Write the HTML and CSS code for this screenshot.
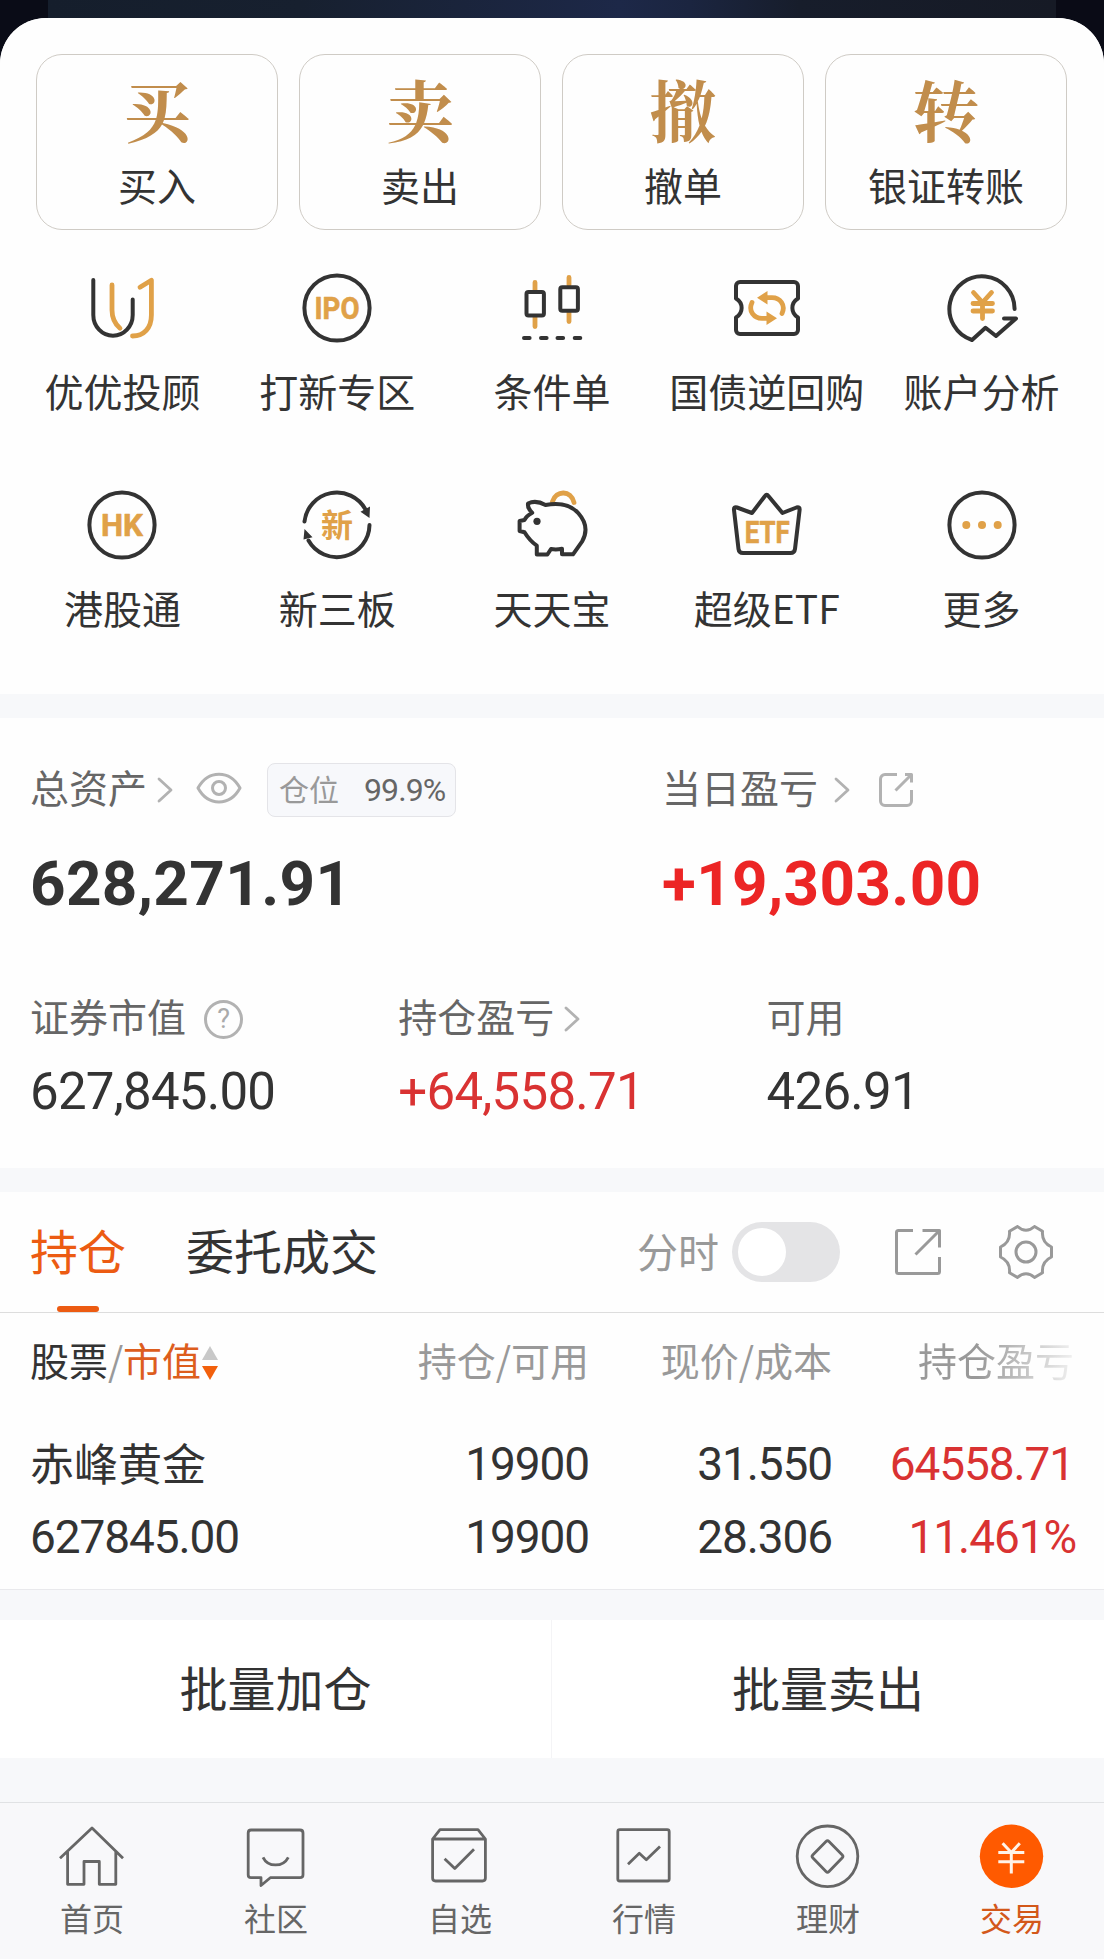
FILE: index.html
```html
<!DOCTYPE html>
<html lang="zh-CN">
<head>
<meta charset="utf-8">
<title>交易</title>
<link rel="stylesheet" href="styles.css">
</head>
<body>
<div class="app">
  <main class="sheet">
    <section class="quick">
      <a class="quick-card"><span class="quick-glyph">买</span><span class="label">买入</span></a>
      <a class="quick-card"><span class="quick-glyph">卖</span><span class="label">卖出</span></a>
      <a class="quick-card"><span class="quick-glyph">撤</span><span class="label">撤单</span></a>
      <a class="quick-card"><span class="quick-glyph">转</span><span class="label">银证转账</span></a>
    </section>

    <section class="funcs">
      <a class="func">
        <svg class="func-icon" viewBox="0 0 76 76"><path class="ink" d="M9.3 10V45a19.7 20.8 0 0 0 39.4 0V29.5"/><path class="gold" d="M28 15V40C28 49 31 54 36 58.3"/><path class="gold" d="M56 17.3L67.4 10.3V45C67.4 58 60 66 48.5 66"/></svg>
        <span class="label">优优投顾</span>
      </a>
      <a class="func">
        <svg class="func-icon" viewBox="0 0 76 76"><circle class="ink" cx="38" cy="38" r="32.6"/><text class="badge" x="38" y="49" text-anchor="middle" textLength="45" lengthAdjust="spacingAndGlyphs">IPO</text></svg>
        <span class="label">打新专区</span>
      </a>
      <a class="func">
        <svg class="func-icon" viewBox="0 0 76 76"><path class="gold" d="M21 12.500V20M21 47V56.500M55 7.500V15M55 42V51.500"/><rect class="ink" x="12.500" y="22" width="17.400" height="23.400" rx="2"/><rect class="ink" x="46.300" y="17.200" width="17.600" height="23.600" rx="2"/><path class="ink" d="M10 68h5.600M27 68h5.600M43.500 68h5.600M60.700 68h5.600"/></svg>
        <span class="label">条件单</span>
      </a>
      <a class="func">
        <svg class="func-icon" viewBox="0 0 76 76"><path class="ink" d="M11 12H65a4 4 0 0 1 4 4V28.500C61.500 33 61.500 43 69 47.500V60a4 4 0 0 1-4 4H11a4 4 0 0 1-4-4V47.500C14.500 43 14.500 33 7 28.500V16a4 4 0 0 1 4-4Z"/><path class="gold" d="M53 43.500C57 35 51 27.700 43 27.700H36M23 32.500C19 41 25 48.300 33 48.300H40"/><path class="gold-fill" d="M28 27.700L38.500 21v13.400ZM48 48.300L37.500 55V41.600Z"/></svg>
        <span class="label">国债逆回购</span>
      </a>
      <a class="func">
        <svg class="func-icon" viewBox="0 0 76 76"><path class="ink" d="M70.600 39A32.600 32.600 0 1 0 28 70L41.500 57.700L52 66L72 48.500H60"/><path class="gold" d="M29.500 22.500L38.500 32.500L47.500 22.500M38.500 32.500V48.500M29 33.500H48.500M29 41H48.500"/></svg>
        <span class="label">账户分析</span>
      </a>
      <a class="func">
        <svg class="func-icon" viewBox="0 0 76 76"><circle class="ink" cx="38" cy="38" r="32.6"/><text class="badge" x="38" y="49" text-anchor="middle" textLength="42" lengthAdjust="spacingAndGlyphs">HK</text></svg>
        <span class="label">港股通</span>
      </a>
      <a class="func">
        <svg class="func-icon" viewBox="0 0 76 76"><path class="ink" d="M5.500 34.500A32.600 32.600 0 0 1 66.500 22.500M70.500 38A32.600 32.600 0 0 1 9.500 53.500"/><path class="ink-fill" d="M71 19.500L61.500 24.800L70.500 31ZM5.500 42L4.500 52.500L13.500 50.300Z"/><text class="badge badge-cn" x="38" y="49.500" text-anchor="middle">新</text></svg>
        <span class="label">新三板</span>
      </a>
      <a class="func">
        <svg class="func-icon" viewBox="0 0 76 76"><path class="gold" d="M38.500 14.500C42 3 57 3 60 15.500"/><path class="ink" d="M14 16.500C20 13.500 27 15.500 31.500 18C48 15 58 19 64.400 26.300C73 36 73 46 68 54.700L59 67.300H48V61.800C44 62.500 40 62.500 37 62L33.400 67.500H22.800V58.700C16 54 14 51 10.500 45.300L5.600 44V34L10.500 33C12 29.500 15 27.500 18.200 25.700C15 23 13.500 21 14 16.500Z"/><circle class="ink-fill" cx="23" cy="34.300" r="3.600"/></svg>
        <span class="label">天天宝</span>
      </a>
      <a class="func">
        <svg class="func-icon" viewBox="0 0 76 76"><path class="ink" d="M36 9Q37.700 6.500 39.400 9L53.500 26L67.500 20.500Q71 19.500 70.600 23L66 62Q65.500 66 61.500 66H14Q10 66 9.500 62L5 23Q4.600 19.500 8 20.500L23 26Z"/><text class="badge" x="38.300" y="55.500" text-anchor="middle" textLength="45" lengthAdjust="spacingAndGlyphs">ETF</text></svg>
        <span class="label">超级ETF</span>
      </a>
      <a class="func">
        <svg class="func-icon" viewBox="0 0 76 76"><circle class="ink" cx="38" cy="38" r="32.6"/><g class="gold-dot"><circle cx="22.300" cy="38" r="4"/><circle cx="38" cy="38" r="4"/><circle cx="53.700" cy="38" r="4"/></g></svg>
        <span class="label">更多</span>
      </a>
    </section>

    <section class="assets">
      <div class="totals">
        <div class="total">
          <div class="caption">
            <span class="caption-text">总资产</span>
            <svg class="chevron" viewBox="0 0 16 26"><path d="M2 2L14 13L2 24"/></svg>
            <svg class="eye" viewBox="0 0 46 32"><path d="M2 16C12-2.500 34-2.500 44 16C34 34.500 12 34.500 2 16Z"/><circle cx="23" cy="16" r="6.500"/></svg>
            <span class="chip">仓位<b class="chip-value">99.9%</b></span>
          </div>
          <strong class="sum">628,271.91</strong>
        </div>
        <div class="total">
          <div class="caption">
            <span class="caption-text">当日盈亏</span>
            <svg class="chevron chevron-far" viewBox="0 0 16 26"><path d="M2 2L14 13L2 24"/></svg>
            <svg class="share-small" viewBox="0 0 34 34"><path d="M18 1.500H6A4.500 4.500 0 0 0 1.500 6V28A4.500 4.500 0 0 0 6 32.500H28A4.500 4.500 0 0 0 32.500 28V17M26 1.500H32.500V9.500M32 2L16.500 17.500"/></svg>
          </div>
          <strong class="sum sum-up">+19,303.00</strong>
        </div>
      </div>
      <div class="details">
        <div class="detail">
          <div class="detail-head">证券市值<span class="help">?</span></div>
          <span class="amount">627,845.00</span>
        </div>
        <div class="detail">
          <div class="detail-head">持仓盈亏<svg class="chevron chevron-detail" viewBox="0 0 16 26"><path d="M2 2L14 13L2 24"/></svg></div>
          <span class="amount up">+64,558.71</span>
        </div>
        <div class="detail">
          <div class="detail-head">可用</div>
          <span class="amount">426.91</span>
        </div>
      </div>
    </section>

    <section class="holdings">
      <header class="tabs">
        <a class="tab tab-on">持仓</a>
        <a class="tab">委托成交</a>
        <span class="switch-label">分时</span>
        <span class="switch"></span>
        <svg class="share" viewBox="0 0 46 46"><path d="M18 1.500H3.500Q1.500 1.500 1.500 3.500V42.500Q1.500 44.500 3.500 44.500H42.500Q44.500 44.500 44.500 42.500V28M27.500 1.500H44.500V18.500M44 2L20.500 25.500"/></svg>
        <svg class="gear" viewBox="0 0 54 54"><path d="M18.500 1.500Q27 9 35.500 1.500L43.500 6.300Q42.500 17.500 52.500 22V32Q42.500 36.500 43.500 47.700L35.500 52.500Q27 45 18.500 52.500L10.500 47.700Q11.500 36.500 1.500 32V22Q11.500 17.500 10.500 6.300Z"/><circle cx="27" cy="27" r="10"/></svg>
      </header>
      <div class="grid head">
        <span class="head-first">股票<i class="slash">/</i><em class="sorted">市值</em><svg class="sort" viewBox="0 0 16 34"><path class="sort-up" d="M8 0L16 14H0Z"/><path class="sort-down" d="M0 20H16L8 34Z"/></svg></span>
        <span>持仓/可用</span>
        <span>现价/成本</span>
        <span class="fading">持仓盈亏</span>
      </div>
      <div class="grid row">
        <span class="stock">赤峰黄金</span><span>19900</span><span>31.550</span><span class="up">64558.71</span>
        <span>627845.00</span><span>19900</span><span>28.306</span><span class="up pct">11.461%</span>
      </div>
    </section>

    <section class="actions">
      <a class="action">批量加仓</a>
      <a class="action">批量卖出</a>
    </section>
  </main>

  <nav class="nav">
    <a class="nav-item"><svg class="nav-icon" viewBox="0 0 72 72"><path d="M4 38.300L36 8L67 38.300M11.600 32V64.300H28V41.500H43.300V64.300H59.800V32"/></svg>首页</a>
    <a class="nav-item"><svg class="nav-icon" viewBox="0 0 72 72"><path d="M11 10H60Q63 10 63 13V54.700Q63 57.700 60 57.700H30.300L21 65.500V57.700H11Q8.200 57.700 8.200 54.700V13Q8.200 10 11 10ZM23 37.300C28 47.500 43 47.500 48.300 37.300"/></svg>社区</a>
    <a class="nav-item"><svg class="nav-icon" viewBox="0 0 72 72"><path d="M8.600 19L16 9.700H54L61.400 19V58Q61.400 61 58.400 61H11.600Q8.600 61 8.600 58ZM8.600 19H61.400M20.600 38.700L30.800 48.500L50 29.300"/></svg>自选</a>
    <a class="nav-item"><svg class="nav-icon" viewBox="0 0 72 72"><rect x="9.800" y="9.700" width="51.400" height="51.300" rx="2"/><path d="M20 44.300L31.300 33.300L38.300 39.700L52 26.500"/></svg>行情</a>
    <a class="nav-item"><svg class="nav-icon" viewBox="0 0 72 72"><circle cx="35.500" cy="36.300" r="30.300"/><path d="M34 21.500Q35.500 20 37 21.500L50.300 35Q51.600 36.300 50.300 37.700L37 51.500Q35.500 53 34 51.500L20.700 37.700Q19.400 36.300 20.700 35Z"/></svg>理财</a>
    <a class="nav-item nav-on"><svg class="nav-icon" viewBox="0 0 72 72"><circle class="coin" cx="35.500" cy="36.300" r="31.700"/><path class="yen" d="M26.600 23.300L35.300 32.500L43.800 23.300M35.300 32.300V53.500M22.300 32.500H48.300M22.300 41.800H48.300"/></svg>交易</a>
  </nav>
</div>
</body>
</html>
```
FILE: styles.css
```css
* { box-sizing: border-box; }

body {
  margin: 0;
  color: #333;
  font-family: "Noto Sans CJK SC", sans-serif;
}

.app {
  width: 1104px;
  height: 1959px;
  padding-top: 18px;
  display: flex;
  flex-direction: column;
  overflow: hidden;
  background:
    linear-gradient(90deg, #0a0c17 48px, #151e2c 48px, #17202f 300px, #1d2848 620px, #1b2540 690px, #171d2b 800px, #161a25 1056px, #0a0b16 1056px) top / 100% 80px no-repeat,
    #f7f8fa;
}

.sheet {
  flex: 1;
  border-radius: 46px 46px 0 0;
  background: #f7f8fa;
  overflow: hidden;
}

.label {
  font-size: 39px;
  line-height: 40px;
  white-space: nowrap;
}

.up { color: #d93232; }

/* buy / sell cards */
.quick {
  display: grid;
  grid-template-columns: repeat(4, 242px);
  gap: 21px;
  padding: 36px 36px 0;
  background: #fefefe;
}

.quick-card {
  display: flex;
  flex-direction: column;
  align-items: center;
  height: 176px;
  padding-top: 21px;
  border: 1px solid #cfcbc5;
  border-radius: 26px;
}

.quick-glyph {
  margin-bottom: 24px;
  color: #c18d4c;
  font: 700 67px/64px "Noto Serif CJK SC", "Source Han Serif SC", "Noto Sans CJK SC", serif;
}

/* function shortcuts */
.funcs {
  display: grid;
  grid-template-columns: repeat(5, 214.8px);
  justify-content: center;
  row-gap: 77px;
  padding: 40px 0 67px;
  background: #fefefe;
}

.func {
  display: flex;
  flex-direction: column;
  align-items: center;
  gap: 24px;
}

.func-icon { width: 76px; height: 76px; }

.ink, .gold {
  fill: none;
  stroke: #333;
  stroke-width: 4;
  stroke-linecap: round;
  stroke-linejoin: round;
}

.gold { stroke: #e0a148; stroke-width: 4.8; }
.ink-fill { fill: #333; }
.gold-fill, .gold-dot { fill: #e0a148; }

.badge {
  fill: #e0a148;
  stroke: #e0a148;
  stroke-width: .6;
  stroke-linejoin: round;
  font: 700 31px Roboto, sans-serif;
}

.badge-cn { font: 700 32px "Noto Sans CJK SC", sans-serif; stroke: none; }

/* assets */
.assets {
  height: 450px;
  margin-top: 24px;
  padding: 45px 30px 0;
  background: #fefefe;
}

.totals { display: grid; grid-template-columns: 632px 1fr; }

.caption { display: flex; align-items: center; height: 54px; }

.caption-text {
  padding-bottom: 9px;
  color: #666;
  font-size: 39px;
  line-height: 40px;
}

.chevron, .eye, .share-small, .share, .gear {
  flex: none;
  fill: none;
  stroke: #b2b2b2;
  stroke-width: 3;
  stroke-linecap: round;
  stroke-linejoin: round;
}

.chevron { width: 16px; height: 26px; margin-left: 10px; stroke-width: 2.8; }
.chevron-far { margin-left: 16px; }
.eye { width: 46px; height: 32px; margin: 0 25px 4px 23px; }
.share-small { width: 34px; height: 34px; margin-left: 29px; stroke-linecap: butt; }

.chip {
  display: flex;
  align-items: center;
  width: 189px;
  height: 54px;
  padding: 0 0 5px 11px;
  border: 1px solid #e4e4e8;
  border-radius: 8px;
  background: #f7f8fb;
  color: #999;
  font-size: 30px;
  line-height: 40px;
}

.chip-value {
  margin: 4px 0 0 25px;
  color: #666;
  font: 400 32px/40px Roboto, sans-serif;
  letter-spacing: -.9px;
}

.sum {
  display: block;
  margin-top: 36px;
  font: 700 62px/62px Roboto, sans-serif;
  letter-spacing: .35px;
}

.sum-up { color: #ec2525; }

.details {
  display: grid;
  grid-template-columns: repeat(3, 368.3px);
  margin-top: 80px;
}

.detail-head {
  display: flex;
  align-items: center;
  height: 40px;
  color: #666;
  font-size: 39px;
  line-height: 40px;
}

.help {
  width: 39px;
  height: 39px;
  margin: 9px 0 0 18px;
  border: 3px solid #b2b2b2;
  border-radius: 50%;
  color: #aaa;
  font: 400 27px/33px Roboto, sans-serif;
  text-align: center;
}

.chevron-detail { margin-top: 8px; }

.amount {
  display: block;
  margin-top: 32px;
  font: 400 51px/50px Roboto, sans-serif;
  letter-spacing: -.75px;
}

/* holdings */
.holdings {
  height: 398px;
  margin-top: 24px;
  border-bottom: 1px solid #e9e9ec;
  background: #fefefe;
}

.tabs {
  display: flex;
  align-items: center;
  height: 121px;
  padding: 0 51px 0 30px;
  border-bottom: 1px solid #ddd;
}

.tab {
  position: relative;
  margin-right: 60px;
  padding-bottom: 6px;
  font-size: 48px;
  line-height: 60px;
}

.tab-on { color: #ec5b12; }

.tab-on::after {
  content: "";
  position: absolute;
  left: 27px;
  bottom: -27px;
  width: 42px;
  height: 6px;
  border-radius: 3px;
  background: #ec5b12;
}

.switch-label {
  margin-left: auto;
  padding-bottom: 5px;
  color: #999;
  font-size: 41px;
  line-height: 50px;
}

.switch {
  width: 108px;
  height: 60px;
  margin-left: 13px;
  padding: 6px;
  border-radius: 30px;
  background: #e4e4e6;
}

.switch::before {
  content: "";
  display: block;
  width: 48px;
  height: 48px;
  border-radius: 50%;
  background: #fff;
}

.share { width: 46px; height: 46px; margin: 0 58px 0 55px; stroke: #999; stroke-linecap: butt; }
.gear { width: 54px; height: 54px; stroke: #999; }

.grid {
  display: grid;
  grid-template-columns: 301px 258px 243px 242px;
  padding-left: 30px;
  text-align: right;
}

.grid > :nth-child(4n + 1) { text-align: left; }

.head {
  height: 115px;
  color: #999;
  font-size: 39px;
  line-height: 92px;
}

.head-first { display: flex; color: #333; }
.slash { width: 15px; color: #999; font-style: normal; }
.sorted { color: #dd5d1d; font-style: normal; }
.sort { width: 16px; height: 34px; margin: 33px 0 0 1px; }
.sort-up { fill: #c8c8c8; }
.sort-down { fill: #f2600c; }

.fading {
  background: linear-gradient(90deg, #999 60%, #fefefe 106%);
  background-clip: text;
  color: transparent;
}

.row {
  font: 400 46px/73px Roboto, sans-serif;
  letter-spacing: -1.1px;
}

.stock {
  font: 400 44px/69px "Noto Sans CJK SC", sans-serif;
  letter-spacing: 0;
}

.pct { margin-right: -2px; }

/* batch actions */
.actions {
  display: grid;
  grid-template-columns: 1fr 1fr;
  height: 138px;
  margin-top: 30px;
  background: #fff;
}

.action {
  font-size: 48px;
  line-height: 132px;
  text-align: center;
}

.action:first-child { border-right: 1px solid #f4f4f6; }

/* bottom navigation */
.nav {
  display: grid;
  grid-template-columns: repeat(6, 1fr);
  height: 157px;
  padding-top: 17px;
  border-top: 1px solid #e0e2e4;
  background: #f8f8fa;
}

.nav-item {
  display: flex;
  flex-direction: column;
  align-items: center;
  gap: 5px;
  color: #666;
  font-size: 32px;
  line-height: 40px;
}

.nav-icon {
  width: 72px;
  height: 72px;
  fill: none;
  stroke: #666;
  stroke-width: 2.8;
  stroke-linejoin: round;
}

.nav-on { color: #d3581a; }
.coin { fill: #ff5a00; stroke: none; }
.yen { stroke: #fff3e8; stroke-width: 3; }
```
